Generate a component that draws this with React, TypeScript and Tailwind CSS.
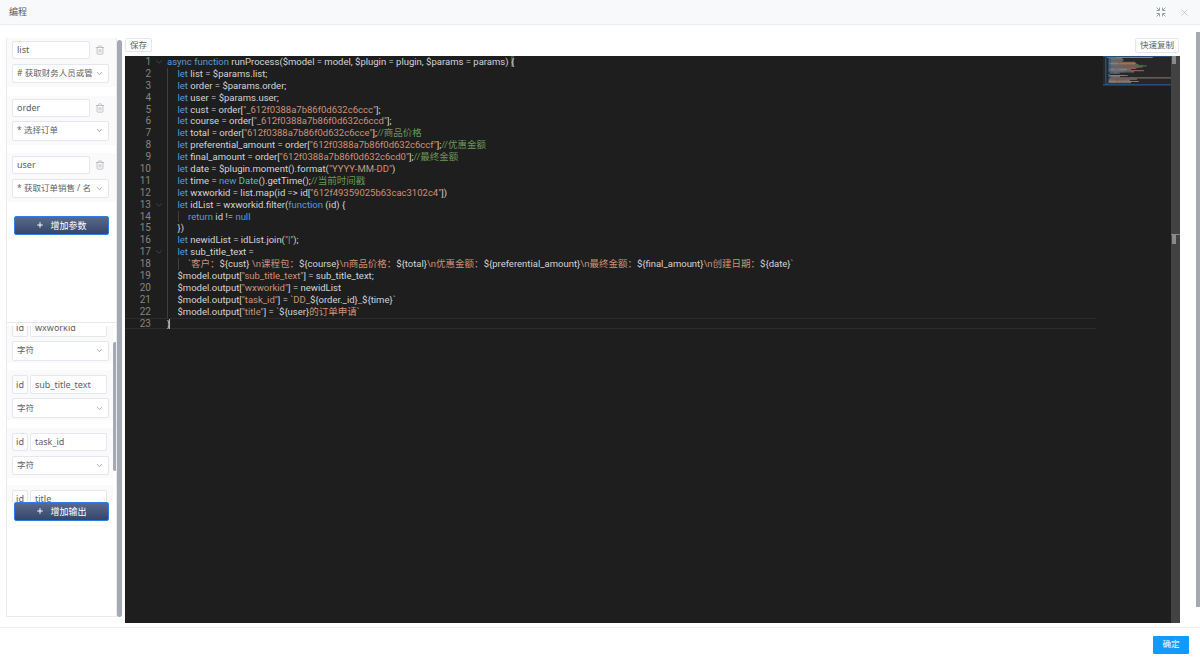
import React from 'react'
import { ChevronDown, Plus, Trash2, X } from 'lucide-react'

const FONT = '"Noto Sans", "Noto Sans CJK SC", sans-serif'
const CODE_FONT = 'Roboto, "Noto Sans CJK SC", sans-serif'

const K = 'text-[#569cd6]'
const V = 'text-[#d4d4d4]'
const S = 'text-[#ce9178]'
const C = 'text-[#6a9955]'
const T = 'text-[#4ec9b0]'
const B = 'text-[#d4d4d4] bg-[#4a4a4a]'

type Seg = [string, string]

// one entry per editor line: indent level + coloured pieces
const code: { i: number; fold?: boolean; s: Seg[] }[] = [
  { i: 0, fold: true, s: [[K, 'async function '], [V, 'runProcess($model = model, $plugin = plugin, $params = params) '], [B, '{']] },
  { i: 1, s: [[K, 'let '], [V, 'list = $params.list;']] },
  { i: 1, s: [[K, 'let '], [V, 'order = $params.order;']] },
  { i: 1, s: [[K, 'let '], [V, 'user = $params.user;']] },
  { i: 1, s: [[K, 'let '], [V, 'cust = order['], [S, '"_612f0388a7b86f0d632c6ccc"'], [V, '];']] },
  { i: 1, s: [[K, 'let '], [V, 'course = order['], [S, '"_612f0388a7b86f0d632c6ccd"'], [V, '];']] },
  { i: 1, s: [[K, 'let '], [V, 'total = order['], [S, '"612f0388a7b86f0d632c6cce"'], [V, '];'], [C, '//商品价格']] },
  { i: 1, s: [[K, 'let '], [V, 'preferential_amount = order['], [S, '"612f0388a7b86f0d632c6ccf"'], [V, '];'], [C, '//优惠金额']] },
  { i: 1, s: [[K, 'let '], [V, 'final_amount = order['], [S, '"612f0388a7b86f0d632c6cd0"'], [V, '];'], [C, '//最终金额']] },
  { i: 1, s: [[K, 'let '], [V, 'date = $plugin.moment().format('], [S, '"YYYY-MM-DD"'], [V, ')']] },
  { i: 1, s: [[K, 'let '], [V, 'time = '], [K, 'new '], [T, 'Date'], [V, '().getTime();'], [C, '//当前时间戳']] },
  { i: 1, s: [[K, 'let '], [V, 'wxworkid = list.map(id => id['], [S, '"612f49359025b63cac3102c4"'], [V, '])']] },
  { i: 1, fold: true, s: [[K, 'let '], [V, 'idList = wxworkid.filter('], [K, 'function '], [V, '(id) {']] },
  { i: 2, s: [[K, 'return '], [V, 'id != '], [K, 'null']] },
  { i: 1, s: [[V, '})']] },
  { i: 1, s: [[K, 'let '], [V, 'newidList = idList.join('], [S, '"|"'], [V, ');']] },
  { i: 1, fold: true, s: [[K, 'let '], [V, 'sub_title_text =']] },
  { i: 2, s: [[S, '`客户：'], [V, '${cust} '], [S, '\\n课程包：'], [V, '${course}'], [S, '\\n商品价格：'], [V, '${total}'], [S, '\\n优惠金额：'], [V, '${preferential_amount}'], [S, '\\n最终金额：'], [V, '${final_amount}'], [S, '\\n创建日期：'], [V, '${date}'], [S, '`']] },
  { i: 1, s: [[V, '$model.output['], [S, '"sub_title_text"'], [V, '] = sub_title_text;']] },
  { i: 1, s: [[V, '$model.output['], [S, '"wxworkid"'], [V, '] = newidList']] },
  { i: 1, s: [[V, '$model.output['], [S, '"task_id"'], [V, '] = '], [S, '`DD_'], [V, '${order._id}'], [S, '_'], [V, '${time}'], [S, '`']] },
  { i: 1, s: [[V, '$model.output['], [S, '"title"'], [V, '] = '], [S, '`'], [V, '${user}'], [S, '的订单申请`']] },
  { i: 0, s: [[V, '}']] },
]

const miniColors: Record<string, string> = { [K]: '#569cd6', [V]: '#a8a8a8', [S]: '#ce9178', [C]: '#6a9955', [T]: '#4ec9b0', [B]: '#a8a8a8' }

function Minimap() {
  return (
    <svg width="68" height="30" className="block">
      <rect x="0" y="0" width="68" height="30" fill="#272727" />
      <rect x="0" y="0" width="68" height="1" fill="#264f78" />
      <rect x="0" y="28" width="68" height="1.5" fill="#264f78" />
      <rect x="2" y="0" width="1.5" height="28" fill="#264f78" />
      {code.map((line, n) => {
        let x = 4 + line.i * 1.5
        return line.s.map(([c, t], j) => {
          const w = t.length * 0.58
          const r = <rect key={`${n}-${j}`} x={x} y={n * 1.2 + 1} width={w} height="1" fill={miniColors[c]} opacity="0.7" />
          x += w
          return r
        })
      })}
    </svg>
  )
}

function SelectBox({ label }: { label: string }) {
  return (
    <div className="flex h-[19.5px] w-[97px] items-center justify-between rounded-[2px] border border-[#e4e7ed] bg-white pl-[4px] pr-[4px] text-[8.5px] text-[#606266]">
      <span className="whitespace-nowrap">{label}</span>
      <ChevronDown size={9} className="shrink-0 text-[#909399]" />
    </div>
  )
}

function ParamCard({ name, type }: { name: string; type: string }) {
  return (
    <div className="flex h-[49px] flex-col gap-[4.5px] bg-[#fafafa] pl-[5px] pt-[3px]">
      <div className="flex items-center">
        <div className="flex h-[18px] w-[78px] items-center rounded-[2px] border border-[#e4e7ed] bg-white pl-[4px] text-[9px] text-[#606266]">{name}</div>
        <Trash2 size={10} className="ml-[5px] text-[#b4b8bf]" />
      </div>
      <SelectBox label={type} />
    </div>
  )
}

function OutputCard({ name }: { name: string }) {
  return (
    <div className="flex h-[50px] w-[106px] flex-col gap-[4.5px] bg-[#fafafa] pl-[5px] pt-[5px]">
      <div className="flex gap-[2px]">
        <div className="flex h-[18.5px] w-[16px] shrink-0 items-center justify-center rounded-[2px] border border-[#e4e7ed] bg-[#fcfcfc] text-[9px] text-[#606266]">id</div>
        <div className="flex h-[18.5px] w-[77px] shrink-0 items-center rounded-[2px] border border-[#e4e7ed] bg-white pl-[4px] text-[9px] text-[#606266]">{name}</div>
      </div>
      <SelectBox label="字符" />
    </div>
  )
}

function AddButton({ label }: { label: string }) {
  return (
    <div className="flex h-[18.5px] w-[95px] items-center justify-center gap-[6px] rounded-[2px] border border-[#2f7fe0] bg-gradient-to-b from-[#5a6a8c] to-[#34466b] text-[9px] text-white">
      <Plus size={8} strokeWidth={3} />
      <span>{label}</span>
    </div>
  )
}

export default function App() {
  return (
    <div className="flex h-[661px] w-[1200px] flex-col overflow-hidden bg-white" style={{ fontFamily: FONT }}>
      {/* Header */}
      <div className="flex h-[25px] shrink-0 items-center justify-between border-b border-[#eceef2] bg-[#f8f9fb] pl-[9px] pr-[10px] text-[9px] text-[#55585f]">
        <span>编程</span>
        <div className="flex items-center gap-[13px] text-[#9a9ea6]">
          <svg width="10" height="10" viewBox="0 0 10 10" fill="none" stroke="currentColor" strokeWidth="1">
            <path d="M0.5 3.5H3.5V0.5M9.5 3.5H6.5V0.5M0.5 6.5H3.5V9.5M9.5 6.5H6.5V9.5M0.5 0.5L3 3M9.5 0.5L7 3M0.5 9.5L3 7M9.5 9.5L7 7" />
          </svg>
          <X size={11} strokeWidth={1} />
        </div>
      </div>

      {/* Body */}
      <div className="flex min-h-0 flex-1 pl-[6px] pt-[7px]">
        {/* Left panel */}
        <div className="mt-[6px] flex h-[579px] w-[117px] shrink-0">
          <div className="flex w-[111px] shrink-0 flex-col border border-[#e9ebef] border-t-0 bg-white">
            <div className="flex h-[285px] shrink-0 flex-col gap-[8px] border-b border-[#e4e7ed]">
              <div className="flex flex-col gap-[8.5px]">
                <ParamCard name="list" type="# 获取财务人员或管" />
                <ParamCard name="order" type="* 选择订单" />
                <ParamCard name="user" type="* 获取订单销售 / 名" />
              </div>
              <div className="mt-[6px] pl-[7px]">
                <AddButton label="增加参数" />
              </div>
            </div>
            <div className="flex min-h-0 flex-1 flex-col">
              <div className="flex h-[179px] shrink-0 overflow-hidden pt-[3px]">
                <div className="w-[106px] shrink-0 overflow-hidden">
                  <div className="mt-[-13px] flex flex-col gap-[7.3px]">
                    <OutputCard name="wxworkid" />
                    <OutputCard name="sub_title_text" />
                    <OutputCard name="task_id" />
                    <OutputCard name="title" />
                  </div>
                </div>
                <div className="w-[4px] pt-[16px]">
                  <div className="h-[129px] w-[4px] rounded-full bg-[#a4a9b2]" />
                </div>
              </div>
              <div className="pl-[7px]">
                <AddButton label="增加输出" />
              </div>
            </div>
          </div>
          <div className="mt-[2px] h-[577px] w-[5px] rounded-sm bg-[#a4a9b2]" />
        </div>

        {/* Editor column */}
        <div className="ml-[2px] mt-[6px] flex w-[1055px] shrink-0 flex-col">
          <div className="flex h-[18px] shrink-0 items-start justify-between">
            <div className="flex h-[14px] items-center rounded-[2px] border border-[#e4e7ed] px-[4px] text-[8.5px] text-[#606266]">保存</div>
            <div className="mr-[1px] flex h-[15px] items-center rounded-[2px] border border-[#e4e7ed] px-[4px] text-[8.5px] text-[#606266]">快速复制</div>
          </div>
          <div className="flex h-[567px] shrink-0 bg-[#1e1e1e] text-[9.5px] leading-[11.9px]" style={{ fontFamily: CODE_FONT }}>
            <div className="min-w-0 flex-1">
              {code.map((line, n) => (
                <div key={n} className={`flex h-[11.9px] items-center whitespace-nowrap ${n === 22 ? 'mr-[7px] shadow-[inset_0_1px_0_#2c2c2c,inset_0_-1px_0_#2c2c2c]' : ''}`}>
                  <div className="w-[26px] shrink-0 text-right text-[10px] text-[#858585]">{n + 1}</div>
                  <div className="flex w-[16px] shrink-0 justify-center">
                    {line.fold && <ChevronDown size={10} strokeWidth={1.5} className="text-[#5a5a5a]" />}
                  </div>
                  <div className="flex">
                    {Array.from({ length: line.i }, (_, g) => (
                      <div key={g} className="h-[11.9px] w-[10.5px] shrink-0 border-l border-[#404040]" />
                    ))}
                    <div className="whitespace-pre">
                      {line.s.map(([c, t], j) => (
                        <span key={j} className={c}>{t}</span>
                      ))}
                      {n === 22 && <span className="ml-[-1px] inline-block h-[10px] w-px bg-[#aeafad] align-middle" />}
                    </div>
                  </div>
                </div>
              ))}
            </div>
            {/* Minimap */}
            <div className="w-[68px] shrink-0">
              <Minimap />
            </div>
            {/* Overview ruler */}
            <div className="relative w-[9px] shrink-0 bg-[#424242]">
              <div className="absolute left-[1px] top-0 h-[8px] w-[4px] bg-[#8a8a8a]" />
              <div className="absolute left-0 top-[178px] h-px w-full bg-[#8a8a8a]" />
              <div className="absolute left-[1px] top-[179px] h-[9px] w-[4px] bg-[#8a8a8a]" />
            </div>
          </div>
        </div>
        <div className="ml-[16px] h-[575px] w-[4px] shrink-0 bg-[#a4a9b2]" />
      </div>

      {/* Footer */}
      <div className="flex h-[34px] shrink-0 items-center justify-end border-t border-[#eceef2] pr-[11px]">
        <div className="flex h-[18px] w-[36px] items-center justify-center rounded-[1px] bg-[#119bff] text-[8.5px] text-white">确定</div>
      </div>
    </div>
  )
}
